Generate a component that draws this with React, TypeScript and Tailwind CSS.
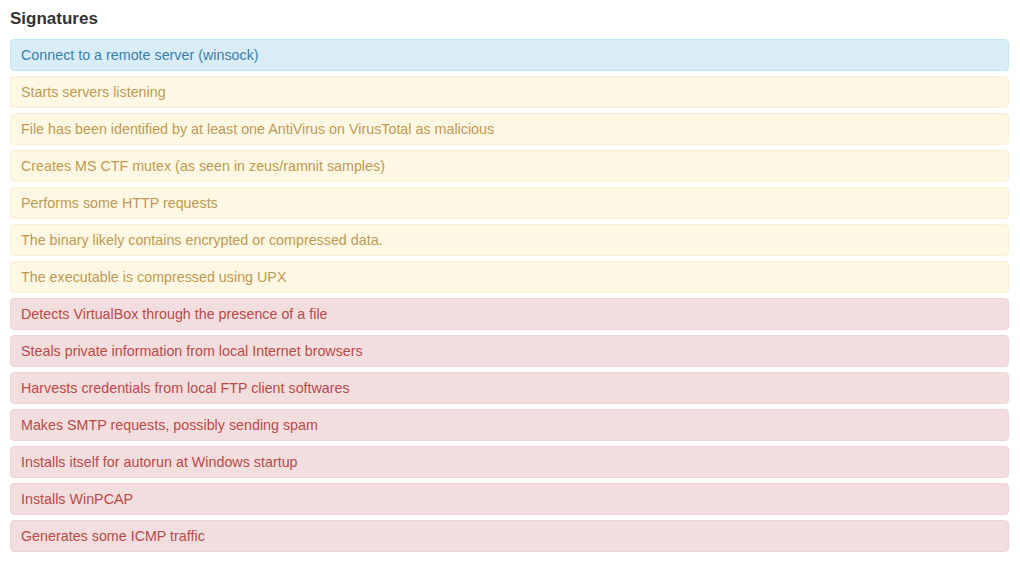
import React from "react";

type Kind = "info" | "warning" | "danger";

const rows: [Kind, string][] = [
  ["info", "Connect to a remote server (winsock)"],
  ["warning", "Starts servers listening"],
  ["warning", "File has been identified by at least one AntiVirus on VirusTotal as malicious"],
  ["warning", "Creates MS CTF mutex (as seen in zeus/ramnit samples)"],
  ["warning", "Performs some HTTP requests"],
  ["warning", "The binary likely contains encrypted or compressed data."],
  ["warning", "The executable is compressed using UPX"],
  ["danger", "Detects VirtualBox through the presence of a file"],
  ["danger", "Steals private information from local Internet browsers"],
  ["danger", "Harvests credentials from local FTP client softwares"],
  ["danger", "Makes SMTP requests, possibly sending spam"],
  ["danger", "Installs itself for autorun at Windows startup"],
  ["danger", "Installs WinPCAP"],
  ["danger", "Generates some ICMP traffic"],
];

const styles: Record<Kind, string> = {
  info: "bg-[#d9edf7] border-[#bce8f1] text-[#3a80aa]",
  warning: "bg-[#fcf8e3] border-[#fbeed5] text-[#c09853]",
  danger: "bg-[#f2dede] border-[#eed3d7] text-[#b94a48]",
};

export default function App() {
  return (
    <div
      className="w-[1020px] h-[565px] bg-white pl-[10px] pr-[11px] pt-[9px]"
      style={{ fontFamily: '"Liberation Sans", Arial, Helvetica, sans-serif' }}
    >
      <h4 className="text-[17px] leading-[20px] font-bold text-[#333] mb-[10px]">Signatures</h4>
      <div className="flex flex-col gap-[5px]">
        {rows.map(([k, t], i) => (
          <div
            key={i}
            className={`border rounded-[4px] px-[10px] py-[5px] text-[14.3px] leading-[20px] ${styles[k]}`}
          >
            {t}
          </div>
        ))}
      </div>
    </div>
  );
}
